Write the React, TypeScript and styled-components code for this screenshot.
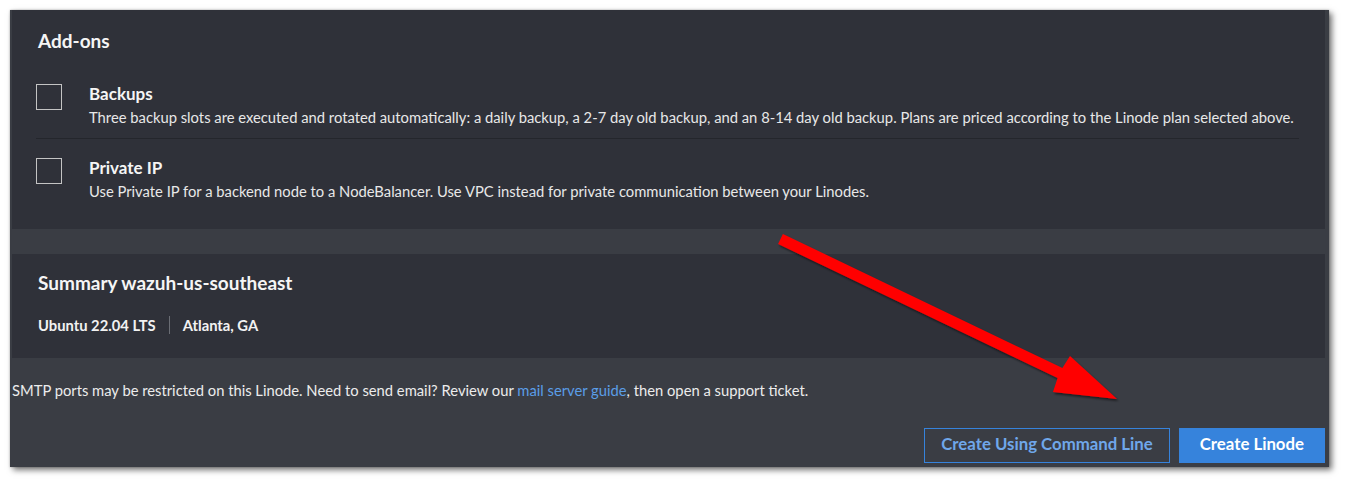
import React from "react";
import styled, { createGlobalStyle } from "styled-components";

const Global = createGlobalStyle`
  html, body { margin: 0; padding: 0; background: #ffffff; }
  body { font-family: Lato, "Open Sans", sans-serif; width: 1346px; height: 485px; overflow: hidden; position: relative; }
`;

const Frame = styled.div`
  margin: 10px 0 0 10px;
  width: 1319px;
  height: 457px;
  box-sizing: border-box;
  padding: 0 4px 4px 2px;
  background: #3a3d44;
  box-shadow: 3px 3px 6px rgba(0, 0, 0, 0.55), 0 0 2px rgba(0, 0, 0, 0.25);
  display: flex;
  flex-direction: column;
`;

const Card = styled.section<{ $h: number; $top?: number; $pt: number }>`
  background: #2f3139;
  height: ${(p) => p.$h}px;
  margin-top: ${(p) => p.$top ?? 0}px;
  box-sizing: border-box;
  padding: ${(p) => p.$pt}px 26px 0 26px;
  flex-shrink: 0;
`;

const Title = styled.h2`
  margin: 0;
  font-size: 19px;
  line-height: 1.2;
  font-weight: 700;
  color: #f5f5f5;
`;

const Row = styled.div<{ $top: number; $pb: number; $divider?: boolean }>`
  display: flex;
  align-items: flex-start;
  gap: 27px;
  margin-top: ${(p) => p.$top}px;
  padding-bottom: ${(p) => p.$pb}px;
  margin-left: -2px;
  border-bottom: ${(p) => (p.$divider ? "1px solid #24262c" : "none")};
`;

const Box = styled.span`
  width: 26px;
  height: 26px;
  box-sizing: border-box;
  border: 1.5px solid #c4c4c4;
  flex-shrink: 0;
`;

const RowText = styled.div`
  display: flex;
  flex-direction: column;
`;

const Label = styled.span`
  font-size: 17px;
  line-height: 1.2;
  font-weight: 700;
  color: #f5f5f5;
`;

const Desc = styled.span`
  margin-top: 5px;
  font-size: 14.78px;
  line-height: 1.2;
  color: #e8e8e8;
  white-space: nowrap;
`;

const Details = styled.div`
  display: flex;
  align-items: center;
  margin-top: 21px;
  font-size: 14.75px;
  font-weight: 700;
  color: #f2f2f2;
`;

const Sep = styled.span`
  width: 1px;
  height: 18px;
  background: #6a6d74;
  margin: 0 13px;
`;

const Notice = styled.p`
  margin: 24px 0 0 0;
  font-size: 14.75px;
  line-height: 1.2;
  color: #ececec;
`;

const Link = styled.a`
  color: #5b9ee8;
  text-decoration: none;
`;

const Actions = styled.div`
  margin-top: auto;
  display: flex;
  justify-content: flex-end;
  gap: 9px;
`;

const Button = styled.button<{ $primary?: boolean }>`
  height: 35px;
  box-sizing: border-box;
  padding: 0 ${(p) => (p.$primary ? 20 : 16)}px 4px;
  font-family: Lato, "Open Sans", sans-serif;
  font-size: 16.8px;
  font-weight: 700;
  border: 1px solid #3683dc;
  background: ${(p) => (p.$primary ? "#3683dc" : "transparent")};
  color: ${(p) => (p.$primary ? "#ffffff" : "#6fa7ea")};
  cursor: pointer;
`;

const ArrowLayer = styled.svg`
  position: absolute;
  left: 0;
  top: 0;
  pointer-events: none;
  overflow: visible;
`;

export default function App() {
  return (
    <>
      <Global />
      <Frame>
        <Card $h={219} $pt={20}>
          <Title>Add-ons</Title>
          <Row $top={31} $pb={11} $divider>
            <Box />
            <RowText>
              <Label>Backups</Label>
              <Desc>
                Three backup slots are executed and rotated automatically: a daily backup, a 2-7 day old backup, and an
                8-14 day old backup. Plans are priced according to the Linode plan selected above.
              </Desc>
            </RowText>
          </Row>
          <Row $top={19} $pb={0}>
            <Box />
            <RowText>
              <Label>Private IP</Label>
              <Desc>
                Use Private IP for a backend node to a NodeBalancer. Use VPC instead for private communication between
                your Linodes.
              </Desc>
            </RowText>
          </Row>
        </Card>
        <Card $h={104} $top={25} $pt={18}>
          <Title>Summary wazuh-us-southeast</Title>
          <Details>
            <span>Ubuntu 22.04 LTS</span>
            <Sep />
            <span>Atlanta, GA</span>
          </Details>
        </Card>
        <Notice>
          SMTP ports may be restricted on this Linode. Need to send email? Review our{" "}
          <Link href="#">mail server guide</Link>, then open a support ticket.
        </Notice>
        <Actions>
          <Button>Create Using Command Line</Button>
          <Button $primary>Create Linode</Button>
        </Actions>
      </Frame>
      <ArrowLayer width="1346" height="485" viewBox="0 0 1346 485">
        <defs>
          <filter id="ash" x="-10%" y="-10%" width="130%" height="130%">
            <feDropShadow dx="1.5" dy="2" stdDeviation="1.2" floodColor="#000" floodOpacity="0.55" />
          </filter>
        </defs>
        <polygon
          points="782.9,234 1062.4,368 1070,356 1117,399 1053,392 1057.6,378 778.1,244"
          fill="#ff0000"
          filter="url(#ash)"
        />
      </ArrowLayer>
    </>
  );
}
